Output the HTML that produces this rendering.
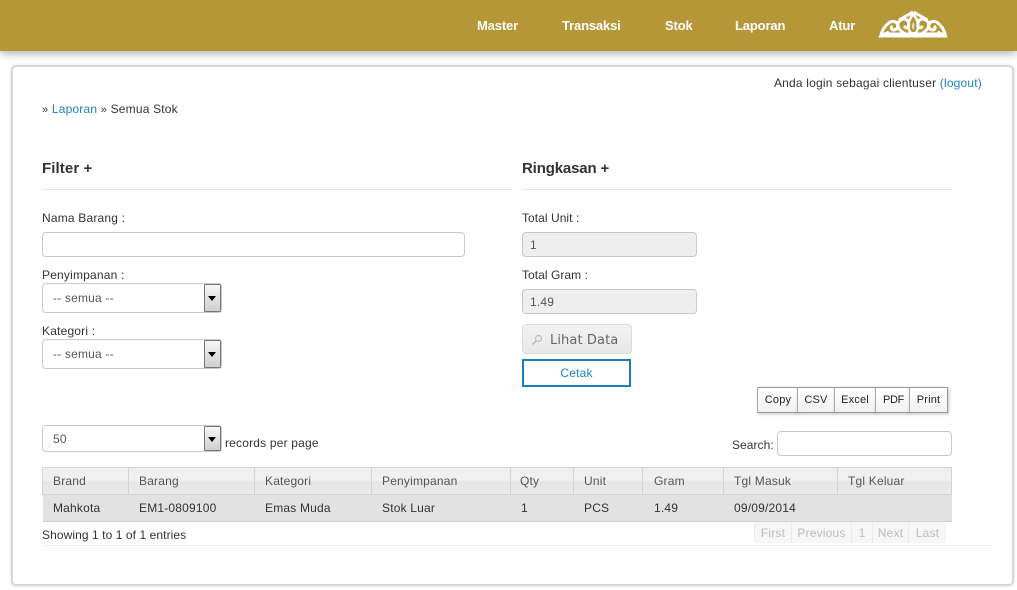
<!DOCTYPE html>
<html><head><meta charset="utf-8"><style>
*{box-sizing:border-box}
html,body{margin:0;padding:0;width:1017px;height:590px;overflow:hidden;background:#fff;font-family:"Liberation Sans",sans-serif;font-size:12px;color:#333;letter-spacing:.19px}
.a{position:absolute;white-space:nowrap;line-height:14px}
.hdr{position:absolute;left:0;top:0;width:1017px;height:51px;background:#b59738;box-shadow:0 2px 9px rgba(0,0,0,.35)}
.nav{position:absolute;top:18px;color:#fff;font-weight:bold;font-size:13px;line-height:15px;white-space:nowrap;letter-spacing:-.15px}
.panel{position:absolute;left:11px;top:65px;width:1003px;height:521px;background:#fff;border:2px solid #d6d6d6;border-radius:5px;box-shadow:0 0 3px rgba(0,0,0,.15)}
a{color:#1a83b8;text-decoration:none}
h3{position:absolute;margin:0;font-size:15px;line-height:16px;font-weight:bold;color:#333;white-space:nowrap}
.hr{position:absolute;height:1px;background:#e4e4e4}
.in{position:absolute;border:1px solid #c8c8c8;border-radius:4px;background:#fff;height:25px}
.ro{background:#eee;color:#555;padding-left:7px;line-height:24px}
.sel{position:absolute;left:42px;width:180px;border:1px solid #c8c8c8;border-radius:4px;background:#fff;color:#555;padding-left:10px}
.arr{position:absolute;right:0;top:0;bottom:0;width:17px;border:1px solid #777;border-radius:1px;background:linear-gradient(#f6f6f6,#cfcfcf)}
.arr:after{content:"";position:absolute;left:3px;top:50%;margin-top:-2px;border:4px solid transparent;border-top:5px solid #000;border-bottom:0}
.btn{position:absolute;top:387px;height:26px;border:1px solid #999;border-left-color:#aaa;background:linear-gradient(#fff,#f1f1f1);font-size:11px;line-height:24px;text-align:center;color:#222;box-shadow:1px 1px 3px rgba(0,0,0,.25)}
.th{position:absolute;top:467px;height:28px;border:1px solid #d4d4d4;background:linear-gradient(#eeeeee 0,#f1f1f1 45%,#e6e6e6 55%,#eaeaea 100%);color:#555;padding-left:10px;line-height:26px}
.td{position:absolute;top:501px;color:#333;line-height:14px;white-space:nowrap}
.pg{position:absolute;top:522px;height:21px;background:#f6f6f6;color:#bbb;border-left:1px solid #eaeaea;text-align:center;line-height:22px}
</style></head><body>
<div class="hdr"></div>
<div class="nav" style="left:477px">Master</div>
<div class="nav" style="left:562px">Transaksi</div>
<div class="nav" style="left:665px">Stok</div>
<div class="nav" style="left:735px">Laporan</div>
<div class="nav" style="left:829px">Atur</div>
<svg style="position:absolute;left:875px;top:8px" width="76" height="32" viewBox="0 0 76 32" fill="none" stroke="#fff" stroke-width="3">
<path d="M4 29 L72 29 L70 25 L6 25 Z" fill="#fff" stroke="#fff" stroke-width="1"/>
<g>
<path d="M6 27 Q8 19 15 14 Q21 12 23 17 Q23 22 18 22 Q15 20 17.500 18"/>
<path d="M32 27 Q21 21 23 15 Q27 9 32 12 Q35 16 33 19 Q31 21 29 18"/>
<path d="M24 12 Q31 8 38 4"/>
<path d="M8 27 L14 24" stroke-width="3"/>
</g>
<g transform="translate(76.500 0) scale(-1 1)">
<path d="M6 27 Q8 19 15 14 Q21 12 23 17 Q23 22 18 22 Q15 20 17.500 18"/>
<path d="M32 27 Q21 21 23 15 Q27 9 32 12 Q35 16 33 19 Q31 21 29 18"/>
<path d="M24 12 Q31 8 38 4"/>
<path d="M8 27 L14 24" stroke-width="3"/>
</g>
<path d="M38.200 6 Q30.500 16 35 24 Q38.200 27 41.500 24 Q46 16 38.200 6" stroke-width="2.500"/>
<path d="M38.200 14 Q35.500 18 38.200 22 Q41 18 38.200 14" fill="#e3dcc0" stroke="none"/>
</svg>
<div class="panel"></div>

<div class="a" style="right:35px;top:76px">Anda login sebagai clientuser <a href="#">(logout)</a></div>
<div class="a" style="left:42px;top:102px"><span style="font-size:11px">»</span> <a href="#">Laporan</a> <span style="font-size:11px">»</span> Semua Stok</div>

<h3 style="left:42px;top:161px;letter-spacing:.1px">Filter +</h3>
<div class="hr" style="left:41px;top:189px;width:471px"></div>
<h3 style="left:522px;top:161px;letter-spacing:-.15px">Ringkasan +</h3>
<div class="hr" style="left:521px;top:189px;width:431px"></div>

<div class="a" style="left:42px;top:211px">Nama Barang :</div>
<div class="in" style="left:42px;top:232px;width:423px"></div>
<div class="a" style="left:42px;top:268px">Penyimpanan :</div>
<div class="sel" style="top:283px;height:30px;line-height:28px">-- semua --<span class="arr"></span></div>
<div class="a" style="left:42px;top:324px">Kategori :</div>
<div class="sel" style="top:339px;height:30px;line-height:28px">-- semua --<span class="arr"></span></div>

<div class="a" style="left:522px;top:211px;letter-spacing:.05px">Total Unit :</div>
<div class="in ro" style="left:522px;top:232px;width:175px">1</div>
<div class="a" style="left:522px;top:268px;letter-spacing:.05px">Total Gram :</div>
<div class="in ro" style="left:522px;top:289px;width:175px">1.49</div>

<div style="position:absolute;left:522px;top:324px;width:110px;height:30px;border:1px solid #dcdcdc;border-radius:4px;background:linear-gradient(#f2f2f2,#e8e8e8)"></div>
<svg style="position:absolute;left:531px;top:334px" width="12" height="12" viewBox="0 0 12 12" fill="none" stroke="#bbb" stroke-width="1.2"><circle cx="7.5" cy="4.5" r="3"/><path d="M5 7 L1.5 10.5" stroke-width="1.6"/></svg>
<div class="a" style="left:550px;top:334px;font-family:'DejaVu Sans',sans-serif;font-size:13px;color:#666;letter-spacing:.1px">Lihat Data</div>
<div style="position:absolute;left:522px;top:359px;width:109px;height:28px;border:2px solid #1a7fad;color:#1a83b8;text-align:center;line-height:24px">Cetak</div>

<div class="btn" style="left:757px;width:41px;padding-left:1px">Copy</div>
<div class="btn" style="left:797px;width:38px">CSV</div>
<div class="btn" style="left:834px;width:42px">Excel</div>
<div class="btn" style="left:875px;width:35px;padding-left:2px;letter-spacing:-.3px">PDF</div>
<div class="btn" style="left:909px;width:39px">Print</div>

<div class="sel" style="top:425px;height:27px;line-height:26px">50<span class="arr"></span></div>
<div class="a" style="left:225px;top:436px">records per page</div>
<div class="a" style="left:732px;top:438px;letter-spacing:.05px">Search:</div>
<div class="in" style="left:777px;top:431px;width:175px"></div>

<div style="position:absolute;left:43px;top:494px;width:909px;height:28px;background:#e2e2e2;border-bottom:1px solid #cfcfcf"></div>
<div class="th" style="left:42px;width:87px">Brand</div>
<div class="th" style="left:128px;width:127px">Barang</div>
<div class="th" style="left:254px;width:118px">Kategori</div>
<div class="th" style="left:371px;width:140px">Penyimpanan</div>
<div class="th" style="left:510px;width:64px;padding-left:9px">Qty</div>
<div class="th" style="left:573px;width:70px">Unit</div>
<div class="th" style="left:642px;width:82px;padding-left:11px">Gram</div>
<div class="th" style="left:723px;width:115px">Tgl Masuk</div>
<div class="th" style="left:837px;width:115px">Tgl Keluar</div>
<div class="td" style="left:53px">Mahkota</div>
<div class="td" style="left:139px">EM1-0809100</div>
<div class="td" style="left:265px">Emas Muda</div>
<div class="td" style="left:382px">Stok Luar</div>
<div class="td" style="left:521px">1</div>
<div class="td" style="left:584px">PCS</div>
<div class="td" style="left:654px">1.49</div>
<div class="td" style="left:734px">09/09/2014</div>

<div class="a" style="left:42px;top:528px;letter-spacing:.08px">Showing 1 to 1 of 1 entries</div>
<div class="hr" style="left:42px;top:545px;width:950px;background:#efefef"></div>
<div class="pg" style="left:754px;width:37px;border-radius:3px 0 0 3px">First</div>
<div class="pg" style="left:791px;width:60px">Previous</div>
<div class="pg" style="left:851px;width:21px">1</div>
<div class="pg" style="left:872px;width:36px">Next</div>
<div class="pg" style="left:908px;width:38px;border-radius:0 3px 3px 0">Last</div>
</body></html>
